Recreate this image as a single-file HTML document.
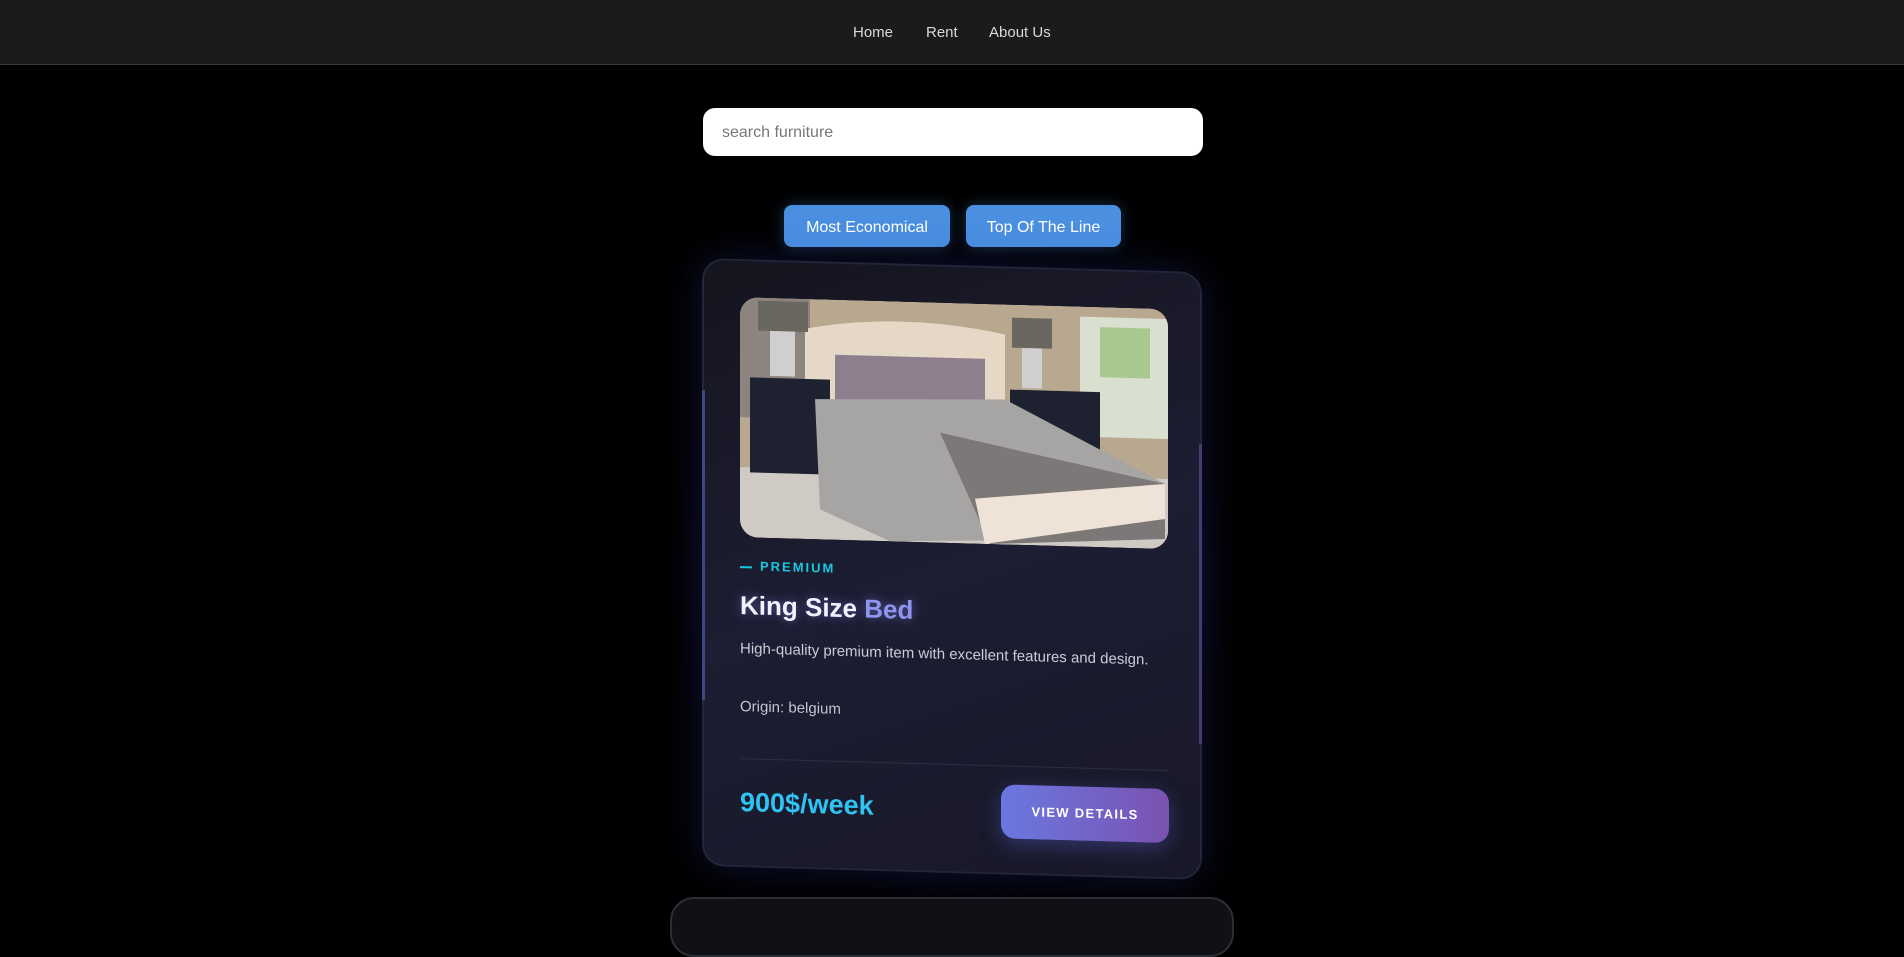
<!DOCTYPE html>
<html><head><meta charset="utf-8"><style>
*{margin:0;padding:0;box-sizing:border-box}
body{width:1904px;height:921px;overflow:hidden;background:#000;font-family:"Liberation Sans",sans-serif;position:relative}
.nav{position:absolute;left:0;top:0;width:1904px;height:65px;background:#1b1b1b;border-bottom:1px solid #3a3a3a}
.nav a{position:absolute;top:24px;color:#d8d8d8;font-size:15px;text-decoration:none}
.search{position:absolute;left:703px;top:108px;width:500px;height:48px;background:#fff;border-radius:12px;color:#777;font-size:16px;padding:16px 19px 0}
.btn{position:absolute;top:205px;height:42px;background:#4a8fe0;border-radius:8px;color:#fff;font-size:16px;line-height:45px;text-align:center;box-shadow:0 0 14px rgba(74,143,224,.35)}
.glow{position:absolute;left:650px;top:230px;width:600px;height:690px;background:radial-gradient(ellipse at center,rgba(40,50,120,.35),rgba(0,0,0,0) 70%)}
.card{position:absolute;left:702px;top:265px;width:500px;height:608px;border-radius:22px;background:linear-gradient(160deg,#15151f,#1d1d33 50%,#181828);border:2px solid #24243a;transform:skewY(1.6deg);box-shadow:0 0 40px rgba(60,70,200,.25)}
.card .edgeL{position:absolute;left:-2px;top:130px;width:3px;height:310px;background:#3a4a80}
.card .edgeR{position:absolute;right:-2px;top:170px;width:3px;height:300px;background:#4a3a70}
.img{position:absolute;left:36px;top:36px;width:428px;height:240px;border-radius:18px;overflow:hidden}
.prem{position:absolute;left:36px;top:297px;color:#18c8e0;font-weight:bold;font-size:13px;letter-spacing:2px}
.prem:before{content:"";display:inline-block;width:12px;height:2px;background:#18c8e0;vertical-align:middle;margin-right:8px}
.title{position:absolute;left:36px;top:329px;font-size:26px;font-weight:bold;color:#f2f2ff;text-shadow:0 0 10px rgba(140,150,255,.5)}
.title span{color:#8e95ee}
.desc{position:absolute;left:36px;top:379px;font-size:15px;color:#ccccd6;white-space:nowrap}
.orig{position:absolute;left:36px;top:437px;font-size:15px;color:#c4c4cc}
.div{position:absolute;left:36px;top:497px;width:428px;height:1px;background:#2e2e44}
.price{position:absolute;left:36px;top:526px;font-size:27px;font-weight:bold;color:#2fc3f2}
.vd{position:absolute;left:297px;top:516px;width:168px;height:54px;border-radius:14px;background:linear-gradient(90deg,#6a78e0,#7a52b0);color:#fff;font-weight:bold;font-size:13px;letter-spacing:1.3px;text-align:center;line-height:54px;box-shadow:0 6px 20px rgba(100,110,230,.35)}
.card2{position:absolute;left:670px;top:897px;width:564px;height:60px;border-radius:24px;border:2px solid #2a2d33;background:#101016}
</style></head><body>
<div class="nav"><a style="left:853px">Home</a><a style="left:926px">Rent</a><a style="left:989px">About Us</a></div>
<div class="search">search furniture</div>
<div class="btn" style="left:784px;width:166px">Most Economical</div>
<div class="btn" style="left:966px;width:155px">Top Of The Line</div>
<div class="glow"></div>
<div class="card"><div class="edgeL"></div><div class="edgeR"></div>
<div class="img"><svg width="428" height="240" viewBox="0 0 428 240">
<rect width="428" height="240" fill="#b8a890"/>
<rect x="0" y="0" width="70" height="120" fill="#8d8480"/>
<rect x="340" y="10" width="88" height="120" fill="#d9e0d0"/>
<rect x="360" y="20" width="50" height="50" fill="#a8c890"/>
<rect x="0" y="170" width="428" height="70" fill="#cfcac4"/>
<path d="M65 30 Q160 10 265 30 L265 110 L65 110Z" fill="#e6d8c6"/>
<rect x="10" y="80" width="80" height="95" fill="#1e2230"/>
<rect x="270" y="85" width="90" height="75" fill="#1e2230"/>
<rect x="18" y="3" width="50" height="30" fill="#6a6660"/>
<rect x="30" y="33" width="25" height="45" fill="#cfcfcf"/>
<rect x="272" y="13" width="40" height="30" fill="#6a6660"/>
<rect x="282" y="43" width="20" height="40" fill="#cfcfcf"/>
<rect x="95" y="55" width="150" height="45" fill="#8e7f8e"/>
<path d="M75 100 L265 95 L425 175 L425 230 L150 240 L80 210Z" fill="#a7a4a4"/>
<path d="M200 130 L425 175 L425 230 L250 240Z" fill="#7d7878"/>
<path d="M235 195 L425 175 L425 210 L245 240Z" fill="#efe2d6"/>
</svg></div>
<div class="prem">PREMIUM</div>
<div class="title">King Size <span>Bed</span></div>
<div class="desc">High-quality premium item with excellent features and design.</div>
<div class="orig">Origin: belgium</div>
<div class="div"></div>
<div class="price">900$/week</div>
<div class="vd">VIEW DETAILS</div>
</div>
<div class="card2"></div>
</body></html>
